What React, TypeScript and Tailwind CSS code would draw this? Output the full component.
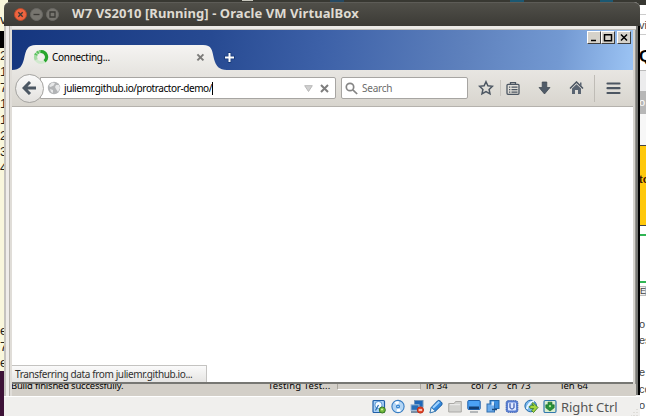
import type { ReactNode } from "react";

const tahoma = "font-['Noto_Sans',sans-serif]";

function WindowButton({ close, children }: { close?: boolean; children: ReactNode }) {
  return (
    <span className={`flex size-[13px] items-center justify-center rounded-full border ${close ? "border-[#b94a2a] bg-[#ee6440]" : "border-[#696864] bg-[#77756f]"}`}>
      <svg width="9" height="9" viewBox="0 0 9 9" fill="none" stroke="#3c3b37" strokeWidth="1.3">{children}</svg>
    </span>
  );
}

function TitleBar() {
  return (
    <header className="flex h-[24px] shrink-0 items-center rounded-t-[6px] border-t border-[#5d5c57] bg-linear-to-b from-[#504f49] to-[#3c3b36] pl-[10px]">
      <div className="-mt-px flex gap-[3px]">
        <WindowButton close><path d="M2.3 2.3l4.4 4.4M6.7 2.3L2.3 6.7" /></WindowButton>
        <WindowButton><path d="M1.5 4.5h6" /></WindowButton>
        <WindowButton><path d="M2 2h5v5H2z" /></WindowButton>
      </div>
      <h1 className="-mt-[3px] ml-[13px] whitespace-nowrap font-['Noto_Sans',sans-serif] text-[13px] leading-[20px] font-bold tracking-[0.08px] text-[#dfdbd2]">
        W7 VS2010 [Running] - Oracle VM VirtualBox
      </h1>
    </header>
  );
}

function CaptionButton({ children }: { children: ReactNode }) {
  return (
    <span className="flex h-[13px] w-[14px] items-center justify-center border border-t-white border-r-[#404040] border-b-[#404040] border-l-white bg-[#d6d2ca]">
      <svg width="10" height="9" viewBox="0 0 10 9" fill="none" stroke="#000" strokeWidth="1.5">{children}</svg>
    </span>
  );
}

function TabStrip() {
  return (
    <div className="relative flex h-[40px] shrink-0 bg-[linear-gradient(97deg,#15367f_0%,#274a92_32%,#3d61a8_50%,#5e81bd_73%,#7399d2_88%,#9cc4f4_100%)]">
      <svg className="absolute inset-0" width="220" height="40" viewBox="0 0 220 40">
        <defs>
          <linearGradient id="tab" x1="0" y1="0" x2="0" y2="1">
            <stop offset="0" stopColor="#f5f4f2" />
            <stop offset="1" stopColor="#e8e6e2" />
          </linearGradient>
        </defs>
        <path d="M0 40C8 40 10 36 12 29C14 20 15 15 24 15H191C200 15 200 20 202 29C204 36 207 40 215 40Z" fill="url(#tab)" />
      </svg>
      <div className="relative flex w-[203px] items-center pt-[14px] pl-[21px]">
        <svg width="16" height="16" viewBox="0 0 16 16" fill="none" strokeWidth="3.2">
          <circle cx="8" cy="8" r="5.5" stroke="#d0e9cd" />
          <path d="M8 2.5A5.5 5.5 0 0 1 11.6 12.2" stroke="#27a52c" />
          <path d="M2.7 6.5A5.5 5.5 0 0 1 8 2.5" stroke="#5cc25f" strokeDasharray="2 .7" />
          <path d="M3.2 10.7A5.5 5.5 0 0 1 2.7 6.5" stroke="#a6dba5" />
        </svg>
        <span className={`${tahoma} ml-[3px] text-[10px] tracking-[-0.3px] text-black`}>Connecting...</span>
        <svg className="mr-[10px] ml-auto" width="9" height="9" viewBox="0 0 9 9" stroke="#7c7b79" strokeWidth="2"><path d="M1.4 1.4l6 6M7.4 1.4l-6 6" /></svg>
      </div>
      <svg className="relative mt-[22px] ml-[9px]" width="11" height="11" viewBox="0 0 11 11"><path d="M5.5 0v11M0 5.5h11" stroke="#173b7b" strokeWidth="3.4" /><path d="M5.5 1v9M1 5.5h9" stroke="#fff" strokeWidth="2" /></svg>
      <div className="mt-[1px] mr-[2px] ml-auto flex">
        <CaptionButton><path d="M2 7.5h5" /></CaptionButton>
        <CaptionButton><path d="M1.5 1.7h7v6h-7z" /></CaptionButton>
        <span className="w-[2px]" />
        <CaptionButton><path d="M2 1.5l6 6M8 1.5l-6 6" /></CaptionButton>
      </div>
    </div>
  );
}

function NavBar() {
  return (
    <div className="flex h-[37px] shrink-0 items-center border-b border-[#b5b2ad] bg-linear-to-b from-[#e8e6e2] to-[#d8d5ce] pl-[3px]">
      <span className="z-10 flex size-[29px] shrink-0 items-center justify-center rounded-full border border-[#a4a3a0] bg-linear-to-b from-[#fafafa] to-[#e3e1de]">
        <svg width="15" height="14" viewBox="0 0 15 14" fill="none" stroke="#4c5763" strokeWidth="3"><path d="M14 7H3M8 1L2 7l6 6" /></svg>
      </span>
      <div className="-ml-[4px] flex h-[22px] w-[296px] shrink-0 items-center rounded-r-[2px] border border-[#a7a5a2] bg-white pl-[6px]">
        <svg width="14" height="14" viewBox="0 0 14 14">
          <circle cx="7" cy="7" r="6.2" fill="#b2b4b6" />
          <path d="M5 1.5L8 2L6.7 4.5L3.5 6L2 5ZM9 4l3 0 1 3-2 4-2-3-1-2ZM3 8l3 1 0 3-2-1Z" fill="#e7e8e9" />
        </svg>
        <span className={`${tahoma} ml-[3px] whitespace-nowrap border-r border-black text-[10px] leading-[13px] tracking-[-0.41px] text-black`}>juliemr.github.io/protractor-demo/</span>
        <svg className="ml-auto" width="9" height="7" viewBox="0 0 9 7"><path d="M.7.7h7.6L4.5 6.5Z" fill="#d0d0d0" stroke="#b8b8b8" /></svg>
        <svg className="mr-[6px] ml-[7px]" width="9" height="9" viewBox="0 0 9 9" stroke="#7e7e7e" strokeWidth="2"><path d="M1 1l7 7M8 1L1 8" /></svg>
      </div>
      <div className="ml-[5px] flex h-[22px] w-[127px] shrink-0 items-center rounded-[2px] border border-[#a7a5a2] bg-white pl-[3px]">
        <svg width="13" height="13" viewBox="0 0 13 13" fill="none" stroke="#858585" strokeWidth="1.7"><circle cx="5" cy="5" r="3.7" /><path d="M7.8 7.8l4.4 4.2" /></svg>
        <span className={`${tahoma} ml-[4px] text-[10px] tracking-[-0.22px] text-[#6c6c6c]`}>Search</span>
      </div>
      <svg className="ml-[10px] shrink-0" width="16" height="16" viewBox="0 0 16 16" fill="none" stroke="#4c5662" strokeWidth="1.5"><path d="M8 1.7l1.9 4.1 4.5.5-3.3 3.1.9 4.5L8 11.6l-4 2.3.9-4.5L1.6 6.3l4.5-.5Z" /></svg>
      <span className="ml-[6px] h-[16px] w-px bg-[#c7c4be]" />
      <svg className="ml-[5px] shrink-0" width="14" height="15" viewBox="0 0 14 15" fill="none" stroke="#4c5662" strokeWidth="1.3"><rect x="1" y="3.3" width="12" height="10" rx="1" /><path d="M4.5 3V1.6h5V3M3 6.2h1.3M5.5 6.2h6M3 8.7h1.3M5.5 8.7h6M3 11.2h1.3M5.5 11.2h6" /></svg>
      <svg className="ml-[18px] shrink-0" width="13" height="14" viewBox="0 0 13 14"><path d="M4.2 1h4.6v5.5H12L6.5 13 1 6.5h3.2Z" fill="#505b68" stroke="#39434e" strokeWidth=".7" /></svg>
      <svg className="ml-[18px] shrink-0" width="15" height="14" viewBox="0 0 15 14"><path d="M1 7.5L7.5 1 14 7.5" fill="none" stroke="#4c5662" strokeWidth="1.5" /><path d="M3 7.5L7.5 3.3 12 7.5V13H9V9H6v4H3ZM11 1.5h1.5V5L11 3.7Z" fill="#596471" /></svg>
      <span className="ml-[10px] h-[27px] w-px bg-[#bfbcb6]" />
      <svg className="ml-[11px] shrink-0" width="15" height="13" viewBox="0 0 15 13" stroke="#4c5662" strokeWidth="2.2" strokeLinecap="round"><path d="M1.5 1.5h12M1.5 6.2h12M1.5 11h12" /></svg>
    </div>
  );
}

function GuestStatus() {
  return (
    <div className="h-[12px] shrink-0 overflow-hidden bg-[#d3cfc8]">
      <div className={`${tahoma} -mt-[5px] -ml-px flex text-[9.5px] leading-[14px] whitespace-nowrap text-black`}>
        <span className="w-[257px] tracking-[-0.22px]">Build finished successfully.</span>
        <span className="w-[69px] tracking-[0.15px]">Testing Test...</span>
        <span className="mt-[2px] mr-[5px] h-[9px] w-[84px] border border-[#aaa69e] border-b-white" />
        <span className="w-[45px]">ln 34</span>
        <span className="w-[36px]">col 73</span>
        <span className="w-[54px]">ch 73</span>
        <span>len 64</span>
      </div>
    </div>
  );
}

function DeviceIcons() {
  return (
    <div className="flex gap-[5px]">
      <svg width="14" height="15" viewBox="0 0 14 15"><rect x="1" y="1.5" width="11.5" height="12" rx="1" fill="#a9d0f5" stroke="#205fa8" strokeWidth="1.2" /><circle cx="6.5" cy="6" r="3.6" fill="#f7fbff" stroke="#3d83c9" strokeWidth=".8" /><path d="M3.5 11.5L6.5 6" stroke="#256ab0" strokeWidth="1.2" /><circle cx="10.3" cy="11" r="3" fill="#70b83b" stroke="#397a22" /><circle cx="10" cy="10.4" r="1" fill="#d5f59d" /></svg>
      <svg width="14" height="15" viewBox="0 0 14 15"><circle cx="7" cy="7.5" r="6.1" fill="#b4d6f5" stroke="#377cc2" strokeWidth="1.1" /><path d="M7 7.5L3.5 3.2A5 5 0 0 1 8 2.4ZM7 7.5l3 4.5A5 5 0 0 1 5.5 12.5Z" fill="#fff" /><circle cx="7" cy="7.5" r="2" fill="#2c7fce" /><circle cx="7" cy="7.5" r=".7" fill="#fff" /></svg>
      <svg width="14" height="15" viewBox="0 0 14 15"><rect x="4.5" y="1.5" width="8.5" height="6.5" fill="#2068b9" stroke="#7596b8" /><path d="M9 9.3h4" stroke="#31597e" /><rect x="1" y="5.8" width="8" height="5.5" fill="#286fb9" stroke="#9fbbd7" /><path d="M1 13h7" stroke="#456887" strokeWidth="1.4" /><circle cx="10.4" cy="11" r="3.1" fill="#e84b2b" stroke="#b82d19" /><path d="M8.7 11h3.4" stroke="#fff" strokeWidth="1.3" /></svg>
      <svg width="15" height="15" viewBox="0 0 15 15"><path d="M1 13.8l1.4-5.5L8.7 1.7c1.3-1.1 5.2 1.5 4.3 4L6.6 12Z" fill="#3588dc" stroke="#175b9f" /><path d="M4 8.7L10.3 2.8" stroke="#9fd3ff" strokeWidth="2" /><path d="M1 13.8l1.3-5.3 4.2 3.8Z" fill="#eef6fc" stroke="#3376ae" strokeWidth=".8" /></svg>
      <svg className="ml-[-1px]" width="14" height="15" viewBox="0 0 14 15"><path d="M.7 13V4.5h5.5L7.5 2.5h5.8V13Z" fill="#d2d2cf" stroke="#aaa9a6" /><path d="M2 5.7h10" stroke="#eee" /></svg>
      <svg width="14" height="15" viewBox="0 0 14 15"><rect x=".8" y="1.5" width="12.4" height="9" rx="1" fill="#4ba1f5" stroke="#1d5eaa" /><path d="M2 7.5h10V10H2Z" fill="#123d72" /><path d="M3 13h8" stroke="#a0a4a7" strokeWidth="1.5" /></svg>
      <svg width="14" height="15" viewBox="0 0 14 15"><rect x="4" y="1.5" width="9" height="8" fill="#3b8ede" stroke="#2368aa" /><rect x="1" y="5" width="7.5" height="8" fill="#6cacec" stroke="#316fb0" /><path d="M5.5 2.5h2.5v4H5.5Z" fill="#d3e7f9" /><path d="M6 10.5h5" stroke="#1a4a7d" strokeWidth="1.5" /></svg>
      <svg width="14" height="15" viewBox="0 0 14 15"><rect x="1.2" y="1.7" width="11.6" height="11.6" rx="2" fill="#5b80d5" stroke="#355bb0" strokeDasharray="1.5 .6" /><rect x="3" y="3.5" width="8" height="8" rx="1" fill="#dfe8ff" /><path d="M5 4.2v4.3Q7 11.5 9 8.5V4.2" fill="none" stroke="#4562b4" strokeWidth="1.3" /></svg>
      <svg width="15" height="15" viewBox="0 0 15 15"><circle cx="6.7" cy="7" r="5.8" fill="#76b6ec" stroke="#246bab" /><path d="M3 10C4 5 6 3 10 2" fill="none" stroke="#e8f6ff" strokeWidth="2" /><path d="M9 3.5l5 5-4.5 5-1.8-1.8 2-2.2-3 .2-1.5-2 2.5-1.5 2 .2-2-1.6Z" fill="#a5d73d" stroke="#3b7c28" strokeWidth=".9" /></svg>
      <svg className="ml-[-1px]" width="14" height="15" viewBox="0 0 14 15"><rect x="1" y="1.5" width="12" height="12" rx="1.2" fill="#d9eed0" stroke="#3379ad" strokeWidth="1.2" /><path d="M5 3.2h4v2.6h2.2v3L7 12 2.8 8.8v-3H5Z" fill="#289139" stroke="#176527" strokeWidth=".6" /><circle cx="7" cy="7.2" r="1.1" fill="#b7ed92" /></svg>
    </div>
  );
}

function Browser() {
  return (
    <section className="flex h-[354px] flex-col border-b-2 border-b-[#777773] bg-white">
      <TabStrip />
      <NavBar />
      <main className="flex grow items-end bg-white">
        <div className={`${tahoma} h-[17px] w-[195px] rounded-tr-[1px] border-t border-r border-[#c4c3c1] bg-linear-to-b from-[#fafafa] to-[#e6e5e3] pl-[3px] text-[10px] leading-[16px] tracking-[-0.38px] whitespace-nowrap text-[#303030]`}>
          Transferring data from juliemr.github.io...
        </div>
      </main>
    </section>
  );
}

function LeftBackground() {
  return (
    <aside className="absolute top-0 left-0 h-[416px] w-[8px] overflow-hidden bg-[#f9f7dc] font-['Liberation_Sans',sans-serif] text-[13px] leading-[16px] text-[#262219]">
      <div className="h-[31px] pt-[12px]">v</div>
      <div className="h-[17px] bg-black" />
      {['2', '1', '7', '1', '1', '2', '3', '4'].map((line, i) => <div key={i}>{line}</div>)}
      <div className="mt-[147px]">e</div><div>7</div><div>e</div>
      <div className="h-[50px] bg-[#3d1237]" />
    </aside>
  );
}

function RightBackground() {
  return (
    <aside className="absolute top-0 right-0 flex h-[416px] w-[8px] flex-col overflow-hidden bg-white pl-[1px] font-['Liberation_Sans',sans-serif] text-[11px] text-[#444]">
      <div className="-ml-[1px] h-[5px] shrink-0 bg-[#383832]" />
      <div className="mt-[9px] h-[21px] shrink-0 border-t border-b border-[#ccc] leading-[20px]">vi</div>
      <div className="h-[36px] shrink-0 border-b border-[#bbb] pt-[12px] text-[17px] leading-[20px] font-bold text-black">Q</div>
      <div className="h-[20px] shrink-0 bg-[#ececed]" />
      <div className="h-[23px] shrink-0 bg-[#b7b7b7] pt-[3px] text-white">o</div>
      <div className="h-[31px] shrink-0 bg-[#f7f7f7]" />
      <div className="h-[81px] shrink-0 border-y border-[#444] bg-[#ffc80b] pt-[25px] text-[11px] font-bold text-[#3d1505]">to</div>
      <div className="mt-[8px] h-[2px] shrink-0 bg-[#31b554]" />
      <div className="mt-[45px] h-[2px] shrink-0 bg-[#31b554]" />
      <div className="mt-[3px] h-[10px] shrink-0 border border-[#bbb] bg-[#eee] text-[9px] leading-[8px]">E</div>
      <div className="mt-[20px] shrink-0 leading-[17px]">o</div>
      <div className="shrink-0 leading-[15px]">es</div>
      <div className="mt-[16px] shrink-0 leading-[17px]">e</div>
      <div className="shrink-0 leading-[16px]">co</div>
      <div className="shrink-0 leading-[16px]">o</div>
    </aside>
  );
}

export default function App() {
  return (
    <div className="relative h-[416px] w-[646px] overflow-hidden bg-[#383832]">
      <div className="flex h-[3px] items-start">
        <span className="ml-[242px] h-px w-[11px] bg-[#c8c7bd]" />
        <span className="ml-[77px] h-[2px] w-[14px] bg-[#244963]" />
        <span className="ml-[166px] h-[2px] w-[14px] bg-[#1b5872]" />
        <span className="ml-[76px] h-[2px] w-[13px] bg-[#1b5872]" />
      </div>
      <LeftBackground />
      <RightBackground />
      <div className="absolute top-[2px] left-[4px] flex h-[414px] w-[636px] flex-col rounded-t-[6px] bg-[#efeeec]">
        <TitleBar />
        <div className="flex h-[370px] shrink-0">
          <div className="flex w-[8px]">
            <span className="w-[2px] bg-[#c5c3be]" />
            <span className="w-[3px] bg-[#efedea]" />
            <span className="w-px bg-[#b7b4ae]" />
            <span className="grow bg-[#e0ddd8]" />
          </div>
          <div className="flex w-[624px] flex-col">
            <div className="h-[4px] shrink-0 border-b border-[#bebcb6] bg-[#eceae7]" />
            <div className="flex h-[354px] shrink-0">
              <div className="w-[621px] shrink-0"><Browser /></div>
              <span className="w-[2px] bg-[#d6d3cd]" />
              <span className="w-px bg-[#96948f]" />
            </div>
            <GuestStatus />
          </div>
          <div className="h-[369px] w-[4px] border-l-2 border-[#777773] bg-black" />
        </div>
        <footer className="flex h-[20px] items-center border-t border-white bg-[#f0efed] pl-[368px]">
          <DeviceIcons />
          <span className="ml-[4px] font-['Noto_Sans',sans-serif] text-[13px] leading-[18px] tracking-[-0.07px] text-[#555]">Right Ctrl</span>
          <svg className="mt-auto mr-[2px] ml-auto" width="7" height="8" viewBox="0 0 7 8" stroke="#ccc9c3" strokeDasharray="1 2"><path d="M6 1v7M3 4v4M0 7v1" /></svg>
        </footer>
      </div>
    </div>
  );
}
